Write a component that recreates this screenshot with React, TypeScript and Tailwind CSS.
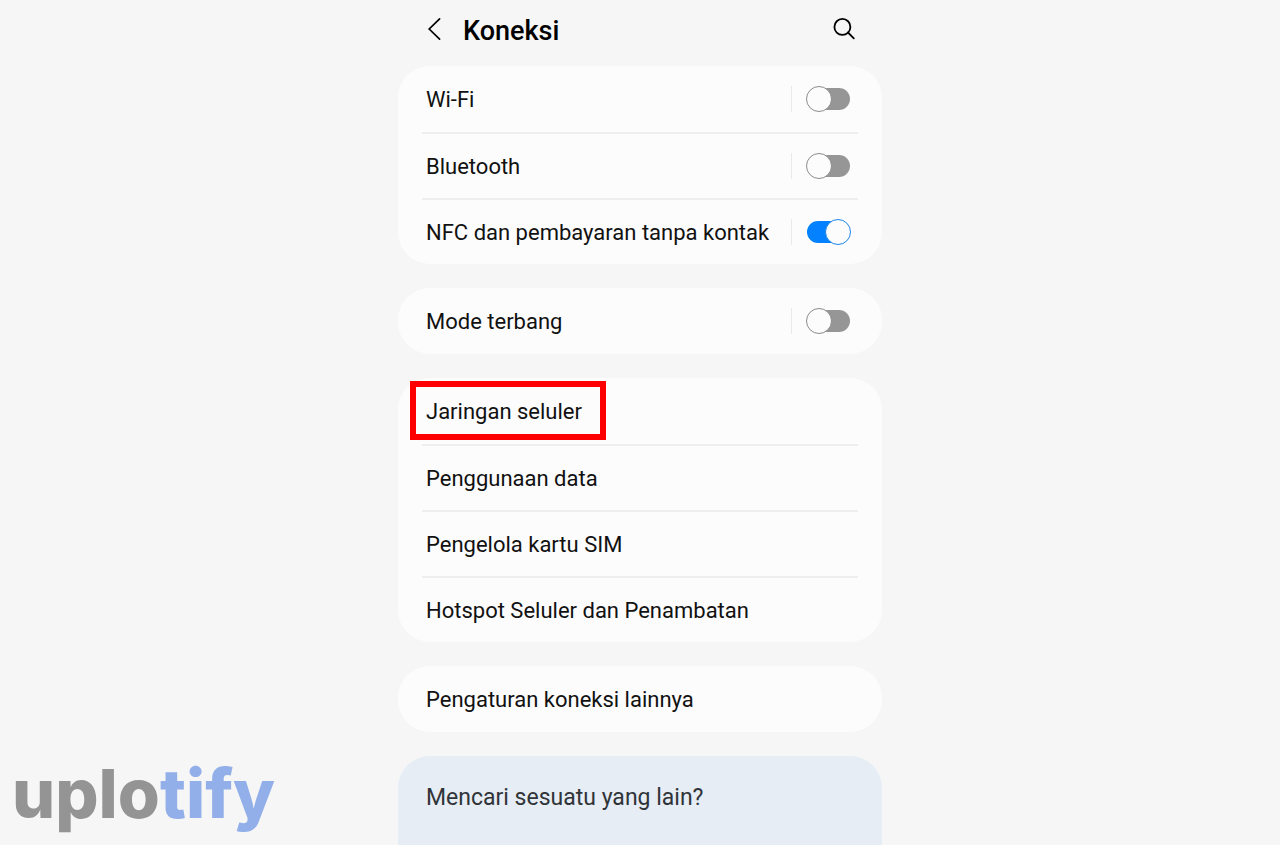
import { useId, useState } from "react";
import type { ReactNode } from "react";

function Card({ children }: { children: ReactNode }) {
  return <section className="rounded-[32px] bg-[#fcfcfc] px-6">{children}</section>;
}

function ToggleRow({ label, initial = false }: { label: string; initial?: boolean }) {
  const id = useId();
  const [on, setOn] = useState(initial);
  return (
    <div className="flex h-[66px] items-center border-t-2 border-[#eeeeee] pr-[7px] pl-1 first:border-t-0">
      <label htmlFor={id} className="flex-1 whitespace-nowrap pt-0.5">
        {label}
      </label>
      <span className="mr-3.5 h-[26px] w-px bg-[#e9e9e9]" />
      <label className="relative flex h-[26px] w-[45px] cursor-pointer items-center">
        <input
          id={id}
          type="checkbox"
          role="switch"
          checked={on}
          onChange={(e) => setOn(e.target.checked)}
          className="peer sr-only"
        />
        <span className="mx-px h-[22px] flex-1 rounded-full bg-[#969696] peer-checked:bg-[#0381fe]" />
        <span className="absolute left-0 size-[26px] rounded-full border border-[#8c8c8c] bg-[#fcfcfc] peer-checked:right-0 peer-checked:left-auto peer-checked:border-[#1a86f0]" />
      </label>
    </div>
  );
}

function LinkRow({ label, highlighted = false }: { label: string; highlighted?: boolean }) {
  return (
    <div className="relative flex h-[66px] border-t-2 border-[#eeeeee] first:border-t-0">
      <button type="button" className="flex flex-1 items-center pt-0.5 pl-1 text-left whitespace-nowrap">
        {label}
      </button>
      {highlighted && (
        <span className="pointer-events-none absolute top-[3px] -left-3 h-[59px] w-[196px] border-6 border-[#ff0000]" />
      )}
    </div>
  );
}

export default function App() {
  return (
    <div className="relative h-screen overflow-hidden bg-[#f6f6f6] font-['Roboto',sans-serif] text-[22px] leading-7 text-[#111111]">
      <main className="mx-auto flex h-full w-full max-w-[484px] flex-col">
        <header className="flex h-[66px] shrink-0 items-center pr-[26px] pb-2 pl-[29px] text-black">
          <button type="button" aria-label="Kembali">
            <svg width="16" height="24" viewBox="0 0 16 24" fill="none" stroke="currentColor" strokeWidth="1.7" strokeLinecap="round">
              <path d="M12.6 1.8 2.2 12 12.6 22.2" />
            </svg>
          </button>
          <h1 className="flex-1 pt-1 pl-5 text-[27px] font-medium">Koneksi</h1>
          <button type="button" aria-label="Cari">
            <svg width="24" height="24" viewBox="0 0 24 24" fill="none" stroke="currentColor" strokeWidth="1.8" strokeLinecap="round">
              <circle cx="10.4" cy="9.9" r="8" />
              <path d="m16 15.5 5.8 5.8" />
            </svg>
          </button>
        </header>
        <div className="flex flex-1 flex-col gap-6">
          <Card>
            <ToggleRow label="Wi-Fi" />
            <ToggleRow label="Bluetooth" />
            <ToggleRow label="NFC dan pembayaran tanpa kontak" initial />
          </Card>
          <Card>
            <ToggleRow label="Mode terbang" />
          </Card>
          <Card>
            <LinkRow label="Jaringan seluler" highlighted />
            <LinkRow label="Penggunaan data" />
            <LinkRow label="Pengelola kartu SIM" />
            <LinkRow label="Hotspot Seluler dan Penambatan" />
          </Card>
          <Card>
            <LinkRow label="Pengaturan koneksi lainnya" />
          </Card>
          <section className="flex-1 rounded-t-[32px] bg-[#e6edf4] px-7 pt-7">
            <h2 className="text-[23px] text-[#303438]">Mencari sesuatu yang lain?</h2>
          </section>
        </div>
      </main>
      <div className="absolute bottom-4 left-3 font-['Inter',sans-serif] text-[68px] leading-[72px] font-extrabold text-[#949494]">
        uplo<span className="text-[#92afe9]">tify</span>
      </div>
    </div>
  );
}
